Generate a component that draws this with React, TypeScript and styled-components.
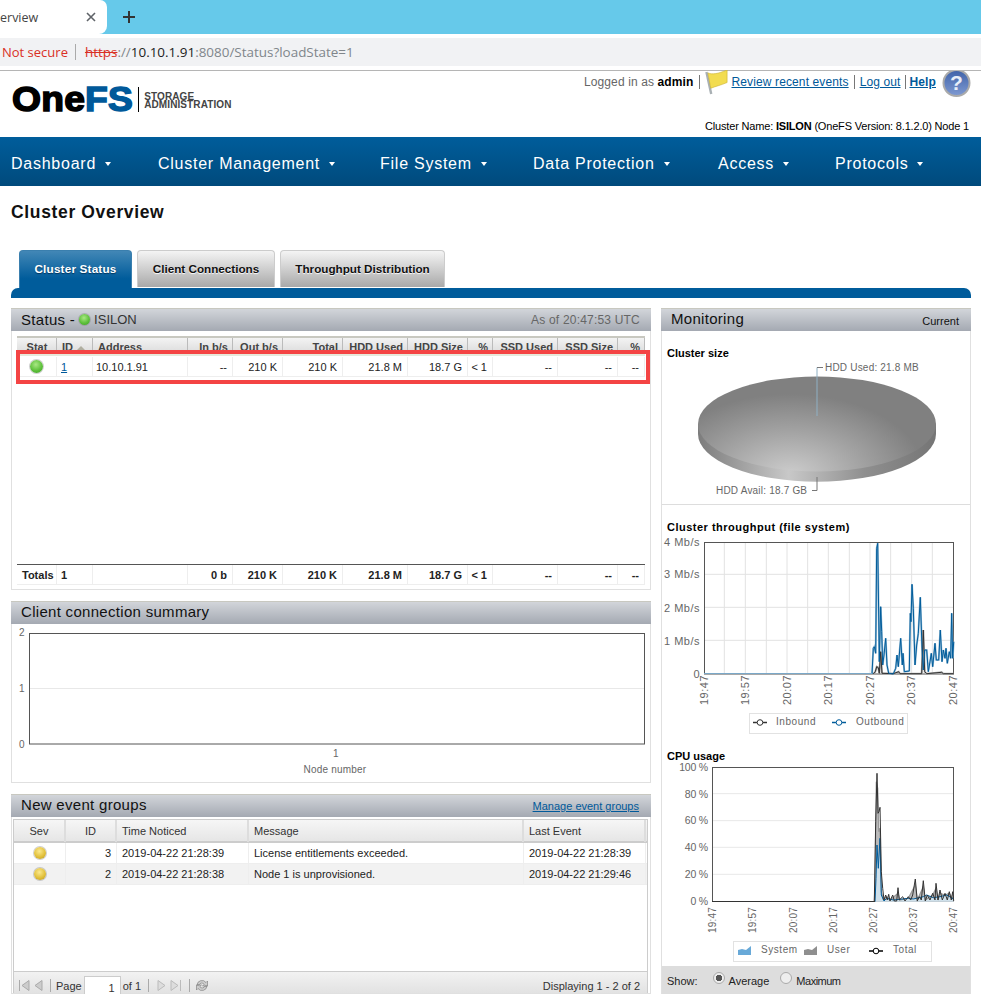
import React from "react";
import styled, { createGlobalStyle } from "styled-components";

const Global = createGlobalStyle`
  html, body { margin: 0; padding: 0; width: 981px; height: 994px; overflow: hidden; background: #fff; }
  body { font-family: "Liberation Sans", Arial, sans-serif; font-size: 11px; color: #222; }
  * { box-sizing: border-box; }
  a { color: #00599a; }
`;

const Page = styled.div`width: 981px; height: 994px; overflow: hidden; display: flex; flex-direction: column;`;

/* browser chrome */
const TabStrip = styled.div`height: 34px; flex: none; background: #66c9ea; display: flex; align-items: center;`;
const BrowserTab = styled.div`
  width: 107px; height: 34px; background: #fff; border-radius: 0 7px 8px 0;
  display: flex; align-items: center; justify-content: space-between; padding: 0 11px 0 0;
  font: 12.5px "Open Sans", sans-serif; color: #444;
`;
const TabX = styled.svg`width: 10px; height: 10px; flex: none;`;
const NewTab = styled.svg`width: 12px; height: 12px; margin-left: 16px;`;
const AddressBar = styled.div`
  height: 28px; flex: none; margin-top: 4px; background: #f1f2f4; display: flex; align-items: center;
  padding-left: 2px; font: 13.45px "Open Sans", sans-serif; color: #80868b;
`;
const NotSecure = styled.span`color: #d93025; font-size: 13px;`;
const AddrSep = styled.span`width: 1px; height: 16px; background: #aaa; margin: 0 9px 0 7px;`;
const Https = styled.span`color: #d93025; text-decoration: line-through;`;
const Host = styled.span`color: #222;`;
const UrlRule = styled.div`height: 1px; flex: none; margin-top: 4px; background: #b5b5b5;`;

/* header */
const Header = styled.header`height: 66px; flex: none; display: flex; justify-content: space-between; padding: 0 11px 0 12px;`;
const Logo = styled.div`display: flex; align-items: center; height: 26px; margin-top: 15px;`;
const LogoMark = styled.span`
  font: 900 34.5px/26px "Liberation Sans", sans-serif; letter-spacing: .2px; color: #000;
  -webkit-text-stroke: 1.5px currentColor; margin-right: 14px; transform: scaleX(1.08); transform-origin: left center;
`;
const LogoFs = styled.span`color: #00599a;`;
const LogoSub = styled.span`
  border-left: 1px solid #000; height: 25px; padding: 3px 0 0 5px; display: flex; flex-direction: column;
  justify-content: center; font: 700 10px/8px "Liberation Sans", sans-serif; color: #444; letter-spacing: .1px;
`;
const UserArea = styled.div`display: flex; flex-direction: column; align-items: flex-end; justify-content: space-between; height: 66px; padding-bottom: 4px;`;
const UserBar = styled.div`display: flex; align-items: center; height: 22px; font-size: 12px; color: #666; letter-spacing: .12px; margin-right: -1px;`;
const Strong = styled.b`color: #000;`;
const Sep = styled.span<{ $m?: number }>`width: 1px; height: 14px; background: #777; flex: none; margin: 0 ${(p) => p.$m ?? 6}px;`;
const HelpLink = styled.a`font-weight: 700;`;
const ClusterName = styled.div`font-size: 11px; color: #000; margin-right: 1px; line-height: 13px; letter-spacing: -.18px;`;

/* nav */
const Nav = styled.nav`
  height: 49px; flex: none; display: flex; align-items: center; padding: 4px 0 0 11px;
  background: linear-gradient(#005d9b, #004a7c); color: #fff;
`;
const NavItem = styled.span<{ $w: number }>`
  width: ${(p) => p.$w}px; font-size: 16px; letter-spacing: .75px; display: flex; align-items: center; gap: 9px; white-space: nowrap;
`;
const NavCaret = styled.i`width: 0; height: 0; border: 3px solid transparent; border-top: 4px solid #fff; border-bottom: 0;`;

/* title + tabs */
const Title = styled.h1`
  height: 64px; flex: none; margin: 0; padding: 16px 0 0 11px; font: 700 17.5px/20px "Liberation Sans", sans-serif; color: #111; letter-spacing: .65px;
`;
const Tabs = styled.div`height: 38px; flex: none; display: flex; gap: 5px; padding-left: 19px; align-items: flex-start;`;
const TabBtn = styled.div<{ $w: number; $on?: boolean }>`
  width: ${(p) => p.$w}px; height: ${(p) => (p.$on ? 38 : 37)}px; border-radius: 4px 4px 0 0;
  font: 700 11.7px/35px "Liberation Sans", sans-serif; text-align: center; letter-spacing: ${(p) => (p.$on ? ".2px" : "0")};
  color: ${(p) => (p.$on ? "#fff" : "#111")};
  background: ${(p) => (p.$on ? "linear-gradient(#4287b6, #005c9b 75%)" : "linear-gradient(#f4f4f4, #a9a9a9)")};
  border: 1px solid ${(p) => (p.$on ? "#3a7fae" : "#ccc")};
  border-bottom: 0;
  text-shadow: ${(p) => (p.$on ? "0 1px 1px #00365e" : "0 1px 1px #fff")};
`;
const TabBand = styled.div`height: 10px; flex: none; margin: 0 10px 0 11px; background: #005c9b; border-radius: 7px 7px 0 0;`;

/* main */
const Columns = styled.main`flex: none; margin-top: 10px; padding: 0 10px 0 11px; display: grid; grid-template-columns: 640px 310px; gap: 10px; height: 686px;`;
const LeftCol = styled.div`display: flex; flex-direction: column; gap: 11px;`;
const Panel = styled.section<{ $h?: number }>`
  position: relative; border: 1px solid #e0e0e0; border-top: 0; background: #fff;
  ${(p) => (p.$h ? `height: ${p.$h}px; flex: none;` : "flex: 1; min-height: 0;")}
  display: flex; flex-direction: column;
`;
const PanelHead = styled.div`
  height: 23px; flex: none; display: flex; align-items: center; justify-content: space-between; padding: 0 12px 0 10px;
  background: linear-gradient(#d2d5da, #a4a9b2); border-top: 1px solid #c8c8c0; color: #111; margin: 0 -1px;
`;
const PanelTitle = styled.span<{ $up: number }>`
  font-size: 15px; display: flex; align-items: center; gap: 4px; letter-spacing: .3px; margin-top: -${(p) => p.$up}px;
`;
const ClusterTag = styled.span`font-size: 13px; letter-spacing: 0; color: #333;`;
const AsOf = styled.span`font-size: 12px; color: #666; letter-spacing: .2px; margin-right: -1px;`;
const Current = styled.span`font-size: 11px; color: #111; margin-top: 2px;`;

const Dot = styled.i<{ $c: "green" | "yellow"; $s?: number }>`
  display: inline-block; flex: none; width: ${(p) => p.$s ?? 14}px; height: ${(p) => p.$s ?? 14}px; border-radius: 50%;
  background: ${(p) =>
    p.$c === "green"
      ? "radial-gradient(circle at 45% 35%, #a9e884, #5fc13c 55%, #389a22)"
      : "radial-gradient(circle at 45% 35%, #fbe98e, #e2c13c 55%, #b8941c)"};
  box-shadow: 0 0 0 1px rgba(120,120,120,.35);
`;

const cols = "40px 36px 95px 45px 50px 60px 65px 60px 25px 65px 60px 27px";
const StatusWrap = styled.div`padding: 5px;`;
const GridHead = styled.div`
  display: grid; grid-template-columns: ${cols}; height: 20px; border-top: 2px solid #c8c8c0;
  background: linear-gradient(#f3f3f3, #dcdcdc); border-bottom: 3px solid #e6e8da;
`;
const HeadCell = styled.div<{ $align?: string; $active?: boolean }>`
  font: 700 11px/19px "Liberation Sans", sans-serif; color: #444; text-align: ${(p) => p.$align ?? "right"};
  padding: 0 4px 0 5px; border-right: 1px solid #bbb; white-space: nowrap; overflow: hidden;
  ${(p) => (p.$active ? "box-shadow: inset 0 -2px 0 #334e70;" : "")}
`;
const SortArrow = styled.i`
  display: inline-block; width: 0; height: 0; border: 4px solid transparent; border-bottom: 4px solid #b0aea0; border-top: 0; margin-left: 4px; vertical-align: 1px;
`;
const GridRow = styled.div<{ $total?: boolean }>`
  display: grid; grid-template-columns: ${cols}; height: 21px; border-bottom: 1px solid #eee;
  ${(p) => (p.$total ? "border-top: 1px solid #555; font-weight: 700;" : "padding-top: 1px;")}
`;
const Cell = styled.div<{ $align?: string; $pl?: number }>`
  display: flex; align-items: center; justify-content: ${(p) => p.$align ?? "flex-end"};
  padding: 0 5px 0 ${(p) => p.$pl ?? 5}px; border-right: 1px solid #eee; color: #222; white-space: nowrap;
`;
const Filler = styled.div`height: 187px;`;
const RedBox = styled.div`position: absolute; left: 4px; top: 42px; width: 634px; height: 34px; border: 4px solid #f44444; pointer-events: none;`;

const ChartSvg = styled.svg`display: block; flex: none;`;
const Tick = styled.text`font: 11px "Liberation Sans", sans-serif; fill: #666; letter-spacing: .5px;`;
const SmallTick = styled(Tick)`font-size: 10px; letter-spacing: .2px;`;
const LegendText = styled(Tick)`font-size: 10px; letter-spacing: .55px;`;
const CpuTick = styled(Tick)`font-size: 10.5px; letter-spacing: -.2px;`;

/* events */
const ManageLink = styled.a`font-size: 11px;`;
const EventBody = styled.div`flex: 1; min-height: 0; margin: 2px 2px 0 1px; border: 1px solid #ccc; border-bottom: 0; display: flex; flex-direction: column;`;
const evCols = "52px 51px 132px 275px 122px";
const EvHead = styled.div`
  display: grid; grid-template-columns: ${evCols}; height: 23px; flex: none;
  background: linear-gradient(#f6f6f6, #e6e6e6); border-bottom: 2px solid #ccc;
`;
const EvHeadCell = styled.div<{ $align?: string }>`
  font-size: 11px; line-height: 22px; color: #333; padding: 0 5px; border-right: 2px solid #ddd; text-align: ${(p) => p.$align ?? "left"};
`;
const EvRow = styled.div<{ $alt?: boolean }>`
  display: grid; grid-template-columns: ${evCols}; height: 21px; flex: none; background: ${(p) => (p.$alt ? "#f2f2f2" : "#fff")}; border-bottom: 1px solid #eee;
`;
const EvCell = styled.div<{ $align?: string }>`
  display: flex; align-items: center; justify-content: ${(p) => p.$align ?? "flex-start"}; padding: 0 5px; color: #222; border-right: 1px solid #eee; white-space: nowrap;
`;
const EvSpacer = styled.div`flex: 1;`;
const Toolbar = styled.div`
  height: 22px; flex: none; border-top: 1px solid #ccc; background: linear-gradient(#f2f2f2, #e2e2e2);
  display: flex; align-items: center; padding: 6px 5px 0 4px; gap: 4px; font-size: 11px; color: #333;
`;
const PageInput = styled.div`width: 37px; height: 19px; margin: -3px -2px -3px -2px; background: #fff; border: 1px solid #ccc; border-bottom: 0; text-align: right; padding: 5px 5px 0 0;`;
const ToolSep = styled.span`width: 1px; height: 13px; background: #aaa; margin: 0 1px 0 3px;`;
const ToolGlyph = styled.svg<{ $w: number; $ml?: number }>`width: ${(p) => p.$w}px; height: 13px; flex: none; margin-left: ${(p) => p.$ml ?? 0}px;`;
const ToolRight = styled.span`margin-left: auto; margin-right: 2px;`;

/* monitoring */
const MonSection = styled.div<{ $pt: number; $line?: boolean }>`
  padding-top: ${(p) => p.$pt}px; ${(p) => (p.$line ? "border-bottom: 1px solid #ddd;" : "")} flex: none;
`;
const MonTitle = styled.div<{ $ls?: number }>`
  font: 700 11px/14px "Liberation Sans", sans-serif; color: #000; padding-left: 5px; letter-spacing: ${(p) => p.$ls ?? 0}px;
`;
const ShowBar = styled.div`
  height: 28px; flex: none; background: #ddd; display: flex; align-items: center; padding: 2px 0 0 5px; font-size: 11px; color: #222;
`;
const Radio = styled.i<{ $on?: boolean }>`
  width: 12px; height: 12px; border-radius: 50%; border: 1px solid #aaa; margin: -6px 4px 0 0; flex: none;
  background: ${(p) => (p.$on ? "radial-gradient(circle, #555 0 3px, #eee 3.5px)" : "#eee")};
`;
const ShowLabel = styled.span<{ $mr?: number; $ls?: number }>`margin-right: ${(p) => p.$mr ?? 0}px; letter-spacing: ${(p) => p.$ls ?? 0}px;`;

const pts = (d: number[][], ox: number, oy: number) =>
  d.map(([x, y]) => `${(ox + x / 3).toFixed(1)},${(oy + y / 3).toFixed(1)}`).join(" ");

const PieChart = () => (
  <ChartSvg width={308} height={144} viewBox="662 360 308 144">
    <defs>
      <radialGradient id="pt" gradientUnits="userSpaceOnUse" cx="790" cy="475" r="135" gradientTransform="matrix(1 0 0 .6 0 190)">
        <stop offset="0" stopColor="#cdcdcd" />
        <stop offset=".55" stopColor="#a2a2a2" />
        <stop offset="1" stopColor="#808080" />
      </radialGradient>
      <linearGradient id="ps" x1="0" x2="1" y1="0" y2="0">
        <stop offset="0" stopColor="#7c7c7c" />
        <stop offset=".38" stopColor="#c8c8c8" />
        <stop offset=".7" stopColor="#8f8f8f" />
        <stop offset="1" stopColor="#757575" />
      </linearGradient>
    </defs>
    <path d="M698 424v10a119 47.7 0 0 0 238 0v-10z" fill="url(#ps)" />
    <ellipse cx="817" cy="424" rx="119" ry="47.5" fill="url(#pt)" />
    <path d="M817 416V367.5" fill="none" stroke="#8fb0c4" />
    <path d="M817 367.5h6" stroke="#777" fill="none" />
    <path d="M817 477v13.5h-5" fill="none" stroke="#777" />
    <SmallTick x="825" y="371">HDD Used: 21.8 MB</SmallTick>
    <SmallTick x="716" y="494">HDD Avail: 18.7 GB</SmallTick>
  </ChartSvg>
);

const out = [[636,477],[640,400],[643,395],[647,415],[650,100],[653,85],[656,300],[658,440],[662,275],[665,350],[668,450],[672,420],[677,370],[681,450],[686,475],[700,477],[707,460],[711,420],[715,455],[722,370],[727,450],[729,415],[733,470],[748,468],[751,295],[753,320],[756,208],[760,280],[765,450],[770,390],[775,355],[781,247],[786,400],[790,465],[794,405],[800,405],[805,470],[810,440],[814,415],[818,455],[825,385],[829,435],[836,435],[841,345],[846,440],[850,405],[855,430],[858,400],[862,445],[868,410],[872,430],[875,295],[878,430],[881,380]];
const inb = [[640,477],[646,470],[650,455],[655,458],[658,475],[662,410],[666,475],[700,476],[716,470],[720,476],[785,476],[790,345],[794,470],[800,476],[845,472],[850,476],[881,476]];

const ThroughputChart = () => (
  <ChartSvg width={308} height={204} viewBox="662 534 308 204">
    {[193,256,319,381,443,505,568,630,692,755,817].map((x) => (
      <line key={x} x1={660 + x / 3} x2={660 + x / 3} y1="543" y2="674" stroke="#e2e2e2" />
    ))}
    {[178,277,376].map((y) => (
      <line key={y} x1="704" x2="953" y1={515 + y / 3} y2={515 + y / 3} stroke="#e2e2e2" />
    ))}
    <rect x="704.500" y="542.500" width="249" height="131.500" fill="none" stroke="#555" />
    <polyline points={pts(out, 660, 515)} fill="none" stroke="#9cc0d8" strokeWidth="2" />
    <polyline points={pts(inb, 660, 515)} fill="none" stroke="#aaa" strokeWidth="2" />
    <polyline points={pts(inb, 660, 515)} fill="none" stroke="#333" />
    <polyline points={pts(out, 660, 515)} fill="none" stroke="#005c9b" />
    <line x1="704" x2="872" y1="673.5" y2="673.5" stroke="#7aa8c8" />
    {[["4 Mb/s", 546], ["3 Mb/s", 578], ["2 Mb/s", 612], ["1 Mb/s", 645], ["0", 678]].map(([t, y]) => (
      <Tick key={t} x="700" y={y} textAnchor="end">{t}</Tick>
    ))}
    {[["19:47",704],["19:57",745],["20:07",787],["20:17",828],["20:27",870],["20:37",911],["20:47",953]].map(([t, x]) => (
      <Tick key={t} transform={`translate(${Number(x) + 4} 705) rotate(-90)`}>{t}</Tick>
    ))}
    <rect x="749.500" y="713.500" width="158" height="20" fill="#fff" stroke="#e2e2e2" />
    <line x1="753" x2="767" y1="722.5" y2="722.5" stroke="#333" strokeWidth="1.5" />
    <circle cx="760" cy="722.5" r="2.8" fill="#fff" stroke="#333" />
    <LegendText x="776" y="725">Inbound</LegendText>
    <line x1="832" x2="846" y1="722.5" y2="722.5" stroke="#005c9b" strokeWidth="1.5" />
    <circle cx="839" cy="722.5" r="2.8" fill="#fff" stroke="#005c9b" />
    <LegendText x="856" y="725">Outbound</LegendText>
  </ChartSvg>
);

const tot = [[643,470],[647,230],[651,85],[654,205],[657,200],[660,187],[664,380],[668,430],[672,465],[677,450],[682,465],[686,448],[690,468],[698,450],[703,468],[710,468],[714,428],[718,465],[728,455],[735,468],[745,455],[752,465],[758,450],[766,402],[772,468],[778,455],[784,465],[790,407],[796,468],[802,450],[810,465],[818,445],[825,465],[828,415],[834,465],[840,435],[847,465],[855,445],[862,465],[868,440],[874,465],[878,440],[881,468]];
const usr = [[643,470],[645,420],[649,110],[653,130],[656,260],[660,250],[664,440],[670,462],[680,455],[690,465],[714,445],[720,465],[745,460],[766,420],[772,465],[790,425],[796,465],[818,450],[828,430],[834,465],[840,445],[855,450],[868,445],[881,465]];
const sys = [[645,470],[648,400],[651,300],[655,370],[660,280],[664,450],[672,468],[680,460],[700,465],[745,460],[760,462],[790,455],[800,450],[820,458],[840,455],[860,450],[881,462]];
const close = (d: number[][]) => [...d, [881, 470], [643, 470]];

const CpuChart = () => (
  <ChartSvg width={308} height={203} viewBox="662 763 308 203">
    {[146,227,307,388].map((y) => (
      <line key={y} x1="712" x2="953" y1={745 + y / 3} y2={745 + y / 3} stroke="#e8e8e8" />
    ))}
    <rect x="712.500" y="767.500" width="241" height="134" fill="none" stroke="#555" />
    <polygon points={pts(close(usr), 660, 745)} fill="#bbb" />
    <polygon points={pts(close(sys), 660, 745)} fill="#cfe0ea" />
    <polyline points={pts(usr, 660, 745)} fill="none" stroke="#999" strokeWidth="1.2" />
    <polyline points={pts(sys, 660, 745)} fill="none" stroke="#005c9b" />
    <polyline points={pts(tot, 660, 745)} fill="none" stroke="#333" />
    <line x1="712" x2="875" y1="901.5" y2="901.5" stroke="#333" />
    {[["100 %", 771], ["80 %", 798], ["60 %", 824], ["40 %", 851], ["20 %", 878], ["0 %", 905]].map(([t, y]) => (
      <CpuTick key={t} x="708" y={y} textAnchor="end">{t}</CpuTick>
    ))}
    {[["19:47",712],["19:57",752],["20:07",793],["20:17",833],["20:27",873],["20:37",913],["20:47",953]].map(([t, x]) => (
      <SmallTick key={t} transform={`translate(${Number(x) + 4} 933) rotate(-90)`}>{t}</SmallTick>
    ))}
    <rect x="733.500" y="941.500" width="198" height="20" fill="#fff" stroke="#e2e2e2" />
    <path d="M738 955v-5l4-1 4 1 5-4v9z" fill="#68a9d8" />
    <LegendText x="761" y="953">System</LegendText>
    <path d="M804 955v-5l4-1 4 1 5-4v9z" fill="#8f8f8f" />
    <LegendText x="827" y="953">User</LegendText>
    <line x1="869" x2="883" y1="951" y2="951" stroke="#000" strokeWidth="1.5" />
    <circle cx="876" cy="951" r="2.8" fill="#fff" stroke="#000" />
    <LegendText x="893" y="953">Total</LegendText>
  </ChartSvg>
);

const ClientChart = () => (
  <ChartSvg width={638} height={158} viewBox="12 624 638 158">
    <line x1="30" x2="644" y1="688.5" y2="688.5" stroke="#e8e8e8" />
    <rect x="29.500" y="633.500" width="615" height="110.500" fill="none" stroke="#555" />
    <SmallTick x="19" y="636">2</SmallTick>
    <SmallTick x="19" y="692">1</SmallTick>
    <SmallTick x="19" y="748">0</SmallTick>
    <SmallTick x="336" y="757" textAnchor="middle">1</SmallTick>
    <SmallTick x="335" y="773" textAnchor="middle">Node number</SmallTick>
  </ChartSvg>
);

const FlagIcon = () => (
  <svg width="24" height="25" viewBox="0 0 24 26" style={{ margin: "0 3px 0 0", flex: "none" }}>
    <path d="M1 2l5 23" stroke="#a9b0b4" strokeWidth="2.5" fill="none" />
    <path d="M2.500 3c5 2 10 1 20-3v13c-7 3-12 4-17 6z" fill="#f2dc50" stroke="#c9ae2c" strokeWidth=".6" />
  </svg>
);
const HelpIcon = () => (
  <svg width="29" height="26" viewBox="0 0 29 26" style={{ margin: "0 0 0 6px", flex: "none", alignSelf: "flex-start" }}>
    <defs>
      <linearGradient id="hb" x1="0" x2="0" y1="0" y2="1">
        <stop offset="0" stopColor="#3f62a8" />
        <stop offset="1" stopColor="#7f9ad2" />
      </linearGradient>
    </defs>
    <circle cx="14.500" cy="12" r="13" fill="url(#hb)" stroke="#aaa" strokeWidth="2" />
    <text x="14.500" y="19" textAnchor="middle" fontFamily="Liberation Sans" fontWeight="700" fontSize="21" fill="#e8eef8">?</text>
  </svg>
);

const statusHead: [string, string?][] = [["Stat", "center"], ["ID", "left"], ["Address", "left"], ["In b/s"], ["Out b/s"], ["Total"], ["HDD Used"], ["HDD Size"], ["%"], ["SSD Used"], ["SSD Size"], ["%"]];
const navItems: [string, number][] = [["Dashboard", 147], ["Cluster Management", 222], ["File System", 153], ["Data Protection", 185], ["Access", 117], ["Protocols", 120]];

export default function App() {
  return (
    <Page>
      <Global />
      <TabStrip>
        <BrowserTab>
          <span>erview</span>
          <TabX viewBox="0 0 10 10"><path d="M1 1l8 8M9 1l-8 8" stroke="#5f6368" strokeWidth="1.6" /></TabX>
        </BrowserTab>
        <NewTab viewBox="0 0 12 12"><path d="M6 0v12M0 6h12" stroke="#333" strokeWidth="2" /></NewTab>
      </TabStrip>
      <AddressBar>
        <NotSecure>Not secure</NotSecure>
        <AddrSep />
        <span><Https>https</Https>://<Host>10.10.1.91</Host>:8080/Status?loadState=1</span>
      </AddressBar>
      <UrlRule />
      <Header>
        <Logo>
          <LogoMark>One<LogoFs>FS</LogoFs></LogoMark>
          <LogoSub><span>STORAGE</span><span>ADMINISTRATION</span></LogoSub>
        </Logo>
        <UserArea>
          <UserBar>
            <span>Logged in as <Strong>admin</Strong></span>
            <Sep $m={5} />
            <FlagIcon />
            <a href="#e">Review recent events</a>
            <Sep $m={5} />
            <a href="#l">Log out</a>
            <Sep $m={4} />
            <HelpLink href="#h">Help</HelpLink>
            <HelpIcon />
          </UserBar>
          <ClusterName>Cluster Name: <Strong>ISILON</Strong> (OneFS Version: 8.1.2.0) Node 1</ClusterName>
        </UserArea>
      </Header>
      <Nav>
        {navItems.map(([t, w]) => (
          <NavItem key={t} $w={w}>{t}<NavCaret /></NavItem>
        ))}
      </Nav>
      <Title>Cluster Overview</Title>
      <Tabs>
        <TabBtn $w={113} $on>Cluster Status</TabBtn>
        <TabBtn $w={138}>Client Connections</TabBtn>
        <TabBtn $w={165}>Throughput Distribution</TabBtn>
      </Tabs>
      <TabBand />
      <Columns>
        <LeftCol>
          <Panel $h={282}>
            <PanelHead>
              <PanelTitle $up={1}>Status - <Dot $c="green" $s={11} /><ClusterTag>ISILON</ClusterTag></PanelTitle>
              <AsOf>As of 20:47:53 UTC</AsOf>
            </PanelHead>
            <StatusWrap>
              <GridHead>
                {statusHead.map(([t, a], i) => (
                  <HeadCell key={i} $align={a} $active={i === 1}>
                    {t}{i === 1 && <SortArrow />}
                  </HeadCell>
                ))}
              </GridHead>
              <GridRow>
                <Cell $align="center"><Dot $c="green" $s={13} /></Cell>
                <Cell $align="flex-start" $pl={4}><a href="#n">1</a></Cell>
                <Cell $align="flex-start" $pl={3}>10.10.1.91</Cell>
                <Cell>--</Cell><Cell>210 K</Cell><Cell>210 K</Cell><Cell>21.8 M</Cell><Cell>18.7 G</Cell>
                <Cell>&lt; 1</Cell><Cell>--</Cell><Cell>--</Cell><Cell>--</Cell>
              </GridRow>
              <Filler />
              <GridRow $total>
                <Cell $align="flex-start">Totals</Cell>
                <Cell $align="flex-start" $pl={4}>1</Cell>
                <Cell />
                <Cell>0 b</Cell><Cell>210 K</Cell><Cell>210 K</Cell><Cell>21.8 M</Cell><Cell>18.7 G</Cell>
                <Cell>&lt; 1</Cell><Cell>--</Cell><Cell>--</Cell><Cell>--</Cell>
              </GridRow>
            </StatusWrap>
            <RedBox />
          </Panel>
          <Panel $h={182}>
            <PanelHead><PanelTitle $up={4}>Client connection summary</PanelTitle></PanelHead>
            <ClientChart />
          </Panel>
          <Panel>
            <PanelHead>
              <PanelTitle $up={4}>New event groups</PanelTitle>
              <ManageLink href="#m">Manage event groups</ManageLink>
            </PanelHead>
            <EventBody>
              <EvHead>
                <EvHeadCell $align="center">Sev</EvHeadCell>
                <EvHeadCell $align="center">ID</EvHeadCell>
                <EvHeadCell>Time Noticed</EvHeadCell>
                <EvHeadCell>Message</EvHeadCell>
                <EvHeadCell>Last Event</EvHeadCell>
              </EvHead>
              <EvRow>
                <EvCell $align="center"><Dot $c="yellow" $s={12} /></EvCell>
                <EvCell $align="flex-end">3</EvCell>
                <EvCell>2019-04-22 21:28:39</EvCell>
                <EvCell>License entitlements exceeded.</EvCell>
                <EvCell>2019-04-22 21:28:39</EvCell>
              </EvRow>
              <EvRow $alt>
                <EvCell $align="center"><Dot $c="yellow" $s={12} /></EvCell>
                <EvCell $align="flex-end">2</EvCell>
                <EvCell>2019-04-22 21:28:38</EvCell>
                <EvCell>Node 1 is unprovisioned.</EvCell>
                <EvCell>2019-04-22 21:29:46</EvCell>
              </EvRow>
              <EvSpacer />
              <Toolbar>
                <ToolGlyph $w={12} viewBox="0 0 12 13"><path d="M1.500 1v11M11 1.500v10L4 6.500z" fill="#ccc" stroke="#aaa" /></ToolGlyph>
                <ToolGlyph $w={9} viewBox="0 0 9 13"><path d="M8 1.500v10L1 6.500z" fill="#ccc" stroke="#aaa" /></ToolGlyph>
                <ToolSep />
                <span>Page</span>
                <PageInput>1</PageInput>
                <span>of 1</span>
                <ToolSep />
                <ToolGlyph $w={9} $ml={3} viewBox="0 0 9 13"><path d="M1 1.500v10L8 6.500z" fill="#ddd" stroke="#bbb" /></ToolGlyph>
                <ToolGlyph $w={12} viewBox="0 0 12 13"><path d="M10.500 1v11M1 1.500v10L8 6.500z" fill="#ddd" stroke="#bbb" /></ToolGlyph>
                <ToolSep />
                <ToolGlyph $w={14} viewBox="0 0 14 13"><path d="M2 6a5 5 0 0 1 9-2.500l1.500-1.500v5h-5l1.700-1.700A3 3 0 0 0 4 6zM12 7a5 5 0 0 1-9 2.500L1.500 11V6h5L4.800 7.700A3 3 0 0 0 10 7z" fill="#ccc" stroke="#777" strokeWidth=".6" /></ToolGlyph>
                <ToolRight>Displaying 1 - 2 of 2</ToolRight>
              </Toolbar>
            </EventBody>
          </Panel>
        </LeftCol>
        <Panel>
          <PanelHead>
            <PanelTitle $up={3}>Monitoring</PanelTitle>
            <Current>Current</Current>
          </PanelHead>
          <MonSection $pt={15} $line>
            <MonTitle>Cluster size</MonTitle>
            <PieChart />
          </MonSection>
          <MonSection $pt={15}>
            <MonTitle $ls={0.5}>Cluster throughput (file system)</MonTitle>
            <ThroughputChart />
          </MonSection>
          <MonSection $pt={11}>
            <MonTitle>CPU usage</MonTitle>
            <CpuChart />
          </MonSection>
          <ShowBar>
            <ShowLabel $mr={15}>Show:</ShowLabel>
            <Radio $on /><ShowLabel $mr={11}>Average</ShowLabel>
            <Radio /><ShowLabel $ls={-0.5}>Maximum</ShowLabel>
          </ShowBar>
        </Panel>
      </Columns>
    </Page>
  );
}
